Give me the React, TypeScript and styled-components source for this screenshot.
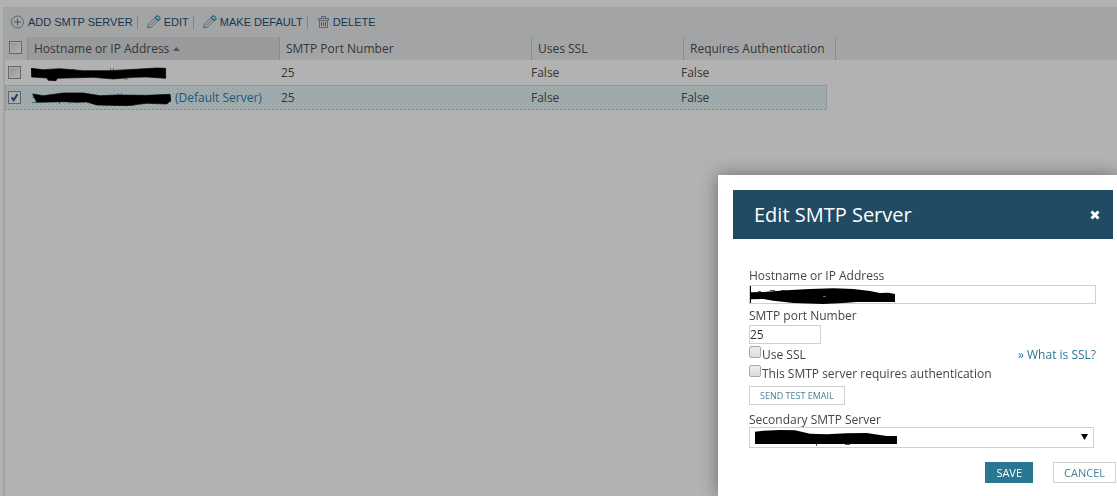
import React, { useState } from 'react';
import styled, { createGlobalStyle, css } from 'styled-components';

const GlobalStyle = createGlobalStyle`
  * { box-sizing: border-box; }
  html, body, #root { height: 100%; }
  body {
    margin: 0;
    overflow: hidden;
    background: #b2b2b2;
    color: #353535;
    font: 12px/16px "Open Sans", sans-serif;
  }
`;

const Page = styled.main`
  min-height: 100%;
  padding: 7px 0 0 3px;
  display: flex;
`;

const Panel = styled.section`
  flex: 1;
  border-left: 2px solid #a3a3a4;
`;

const Toolbar = styled.div`
  display: flex;
  align-items: center;
  height: 30px;
  padding-left: 5px;
  background: #a3a4a6;
`;

const ToolButton = styled.button`
  display: flex;
  align-items: center;
  gap: 3px;
  padding: 0;
  border: 0;
  background: none;
  color: #17374c;
  font: 11px/16px "Liberation Sans", Arial, sans-serif;
  cursor: pointer;
`;

const Divider = styled.span`
  width: 1px;
  height: 13px;
  margin: 0 9px 0 4px;
  background: #85827a;
`;

const Grid = styled.table`
  display: block;
`;

const GridHead = styled.thead`
  display: block;
  background: #a3a4a6;
`;

const GridBody = styled.tbody`
  display: block;
`;

const HeadRow = styled.tr`
  display: grid;
  grid-template-columns: 23px 252px 252px 152px 152px;
  height: 23px;
`;

const HeadCell = styled.th<{ $sorted?: boolean; $check?: boolean }>`
  display: flex;
  align-items: center;
  gap: 4px;
  padding: ${p => (p.$check ? '0 0 2px 4px' : '0 0 0 6px')};
  border-right: 1px solid #8b8c8e;
  font-weight: 400;
  background: ${p => (p.$sorted ? '#999a9b' : 'transparent')};
`;

const Row = styled.tr<{ $selected?: boolean }>`
  display: grid;
  grid-template-columns: 21px 250px 250px 150px 149px;
  width: 822px;
  height: 25px;
  border: 1px dotted transparent;
  ${p => p.$selected && css`
    border-color: #6d8f92;
    background: #a6afb0 url("data:image/svg+xml,%3Csvg xmlns='http://www.w3.org/2000/svg' width='4' height='4' shape-rendering='crispEdges'%3E%3Cpath fill='%2398a5a7' d='M0 0h2v1h1v1h1v2h-1v-1h-1v-1h-1v-1h-1zM0 3h1v1h-1z'/%3E%3C/svg%3E");
  `}
`;

const Cell = styled.td<{ $check?: boolean }>`
  display: flex;
  align-items: center;
  gap: 4px;
  padding: ${p => (p.$check ? '0 0 0 2px' : '0 0 0 4px')};
`;

const Tick = styled.input<{ $light?: boolean }>`
  appearance: none;
  flex: none;
  width: 13px;
  height: 13px;
  margin: 0;
  display: grid;
  place-items: center;
  border: 1px solid #656565;
  background: linear-gradient(135deg, #8f9192, #b4b4b4);
  box-shadow: inset 0 0 0 1px #adadad;
  &:checked {
    background: #acacac url("data:image/svg+xml,%3Csvg xmlns='http://www.w3.org/2000/svg' viewBox='0 0 11 11'%3E%3Cpath d='M2.6 5.2 4.6 8.2 8.4 2.2' fill='none' stroke='%23263068' stroke-width='1.9'/%3E%3C/svg%3E");
  }
  ${p => p.$light && css`
    width: 12px;
    height: 12px;
    border-color: #a9a9a9;
    border-radius: 2px;
    background: linear-gradient(#eeeeee, #dcdcdc);
    box-shadow: none;
  `}
`;

const HostLink = styled.a`
  display: flex;
  align-items: center;
  gap: 4px;
  color: #1b5878;
  text-decoration: none;
`;

const Redaction = styled.svg`
  display: block;
  flex: none;
`;

const Dialog = styled.section`
  position: fixed;
  top: 175px;
  right: 0;
  bottom: 0;
  width: 399px;
  padding: 15px 4px 0 15px;
  background: #fff;
  color: #444;
  box-shadow: 0 0 16px rgba(0, 0, 0, 0.4);
`;

const DialogHeader = styled.header`
  display: flex;
  align-items: center;
  justify-content: space-between;
  height: 49px;
  padding: 0 12px 0 21px;
  background: #214a63;
  color: #fff;
`;

const Title = styled.h2`
  margin: 0;
  font-size: 20px;
  line-height: 28px;
  font-weight: 400;
`;

const CloseButton = styled.button`
  display: flex;
  padding: 0;
  border: 0;
  background: none;
  color: #fff;
  cursor: pointer;
`;

const Form = styled.form`
  display: flex;
  flex-direction: column;
  align-items: flex-start;
  padding: 27px 0 0 16px;
`;

const Label = styled.label`
  margin-top: 3px;
  line-height: 14px;
`;

const Field = styled.div<{ $tight?: boolean }>`
  position: relative;
  align-self: stretch;
  margin: ${p => (p.$tight ? 0 : 2)}px 0 2px;
`;

const Overlay = styled(Redaction)`
  position: absolute;
  pointer-events: none;
  left: 1px;
  top: 1px;
`;

const TextInput = styled.input<{ $width: number }>`
  display: block;
  width: ${p => p.$width}px;
  height: 19px;
  padding: 0;
  border: 1px solid #d0d0d0;
  outline: 0;
  color: #333;
  font: inherit;
`;

const SelectBox = styled.select`
  appearance: none;
  display: block;
  width: 345px;
  height: 21px;
  padding: 0 20px 0 5px;
  border: 1px solid #d0d0d0;
  border-radius: 0;
  background: #fff;
  font: inherit;
`;

const SelectArrow = styled(Redaction)`
  position: absolute;
  right: 25px;
  top: 7px;
  pointer-events: none;
`;

const CheckLine = styled.div`
  align-self: stretch;
  display: flex;
  justify-content: space-between;
  height: 19px;
  padding-right: 17px;
`;

const CheckLabel = styled.label`
  display: flex;
  gap: 1px;
  line-height: 18px;
`;

const HelpLink = styled.a`
  color: #28789a;
  line-height: 18px;
  text-decoration: none;
`;

const Button = styled.button<{ $primary?: boolean; $small?: boolean }>`
  height: ${p => (p.$small ? 19 : 21)}px;
  padding: 0 10px;
  border: 1px solid ${p => (p.$primary ? '#287894' : '#d0d0d0')};
  background: ${p => (p.$primary ? '#287894' : '#fff')};
  color: ${p => (p.$primary ? '#fff' : '#4a8297')};
  font: ${p => (p.$small ? 9 : 11)}px/16px "Open Sans", sans-serif;
  white-space: nowrap;
  cursor: pointer;
`;

const TestButton = styled(Button)`
  margin: 2px 0 5px;
`;

const Actions = styled.div`
  align-self: flex-end;
  display: flex;
  gap: 20px;
  margin: 12px -3px 0 0;
`;

const PlusIcon = () => (
  <svg width="15" height="14" viewBox="0 0 15 14" fill="none" aria-hidden="true">
    <circle cx="7.5" cy="7" r="6" stroke="#5c666c" />
    <path d="M7.5 3.5v7M4 7h7" stroke="#1d6479" />
  </svg>
);

const PencilIcon = () => (
  <svg width="14" height="14" viewBox="0 0 14 14" fill="none" aria-hidden="true">
    <path d="M1.700 8.800 8.300 2.500M4.800 12 11.300 5.500M3.200 10.400 9.800 4" stroke="#5c666c" strokeWidth=".9" />
    <path d="M8.300 2.500 10 .9c.8-.7 3.700 2.200 3 3l-1.700 1.600-3-3Z" stroke="#1d6479" strokeWidth="1.2" />
    <path d="M1.700 8.800.7 12.900l4.100-.9" stroke="#5c666c" />
    <path d="m1 11.500 1.400 1.400" stroke="#1d6479" />
  </svg>
);

const TrashIcon = () => (
  <svg width="13" height="14" viewBox="0 0 13 14" fill="none" aria-hidden="true">
    <path d="M1 3.500h11M4.500 3.500v-2h4v2M1.500 3.500v2h10v-2M2.500 5.500v7h8v-7" stroke="#5c666c" />
    <path d="M4.500 7v4M6.500 7v4M8.500 7v4" stroke="#1d6479" />
  </svg>
);

const CrossIcon = () => (
  <svg width="11" height="10" viewBox="0 0 11 10" aria-hidden="true">
    <path d="m1.500 1.500 7 7m0-7-7 7" stroke="#fff" strokeWidth="3" />
  </svg>
);

const hosts = [
  {
    id: 'first',
    width: 136,
    marks: 'M1.500 1v3M41 2.500h3M79.500 1v4M82.500 1v4M93 12h4',
    path: 'M0 4 37 8 87 5 157 11 237 11 327 6 377 3 404 4V34L347 30 307 31 247 36 187 31 107 33 79 34 75 41 52 40 47 33 2 30Z',
    isDefault: false,
  },
  {
    id: 'second',
    width: 140,
    marks: 'M1 5.500h3M1 10.500h5M28.500 9v3M39 10v2M87.500 1v3M90.500 1v3M99 13.500h5',
    path: 'M5 6 37 11 97 3 157 3 207 11 257 9 347 10 417 7 420 26 407 36 347 34 287 41 197 39 167 30 137 31 97 29 17 31Z',
    isDefault: true,
  },
];

export default function App() {
  const [selected, setSelected] = useState('second');
  return (
    <>
      <GlobalStyle />
      <Page>
        <Panel>
          <Toolbar>
            <ToolButton><PlusIcon />ADD SMTP SERVER</ToolButton>
            <Divider />
            <ToolButton><PencilIcon />EDIT</ToolButton>
            <Divider />
            <ToolButton><PencilIcon />MAKE DEFAULT</ToolButton>
            <Divider />
            <ToolButton><TrashIcon />DELETE</ToolButton>
          </Toolbar>
          <Grid>
            <GridHead>
              <HeadRow>
                <HeadCell $check><Tick type="checkbox" aria-label="Select all" /></HeadCell>
                <HeadCell $sorted>
                  Hostname or IP Address
                  <svg width="7" height="4" viewBox="0 0 7 4" aria-hidden="true"><path d="M0 4 3.5 0 7 4Z" fill="#555" /></svg>
                </HeadCell>
                <HeadCell>SMTP Port Number</HeadCell>
                <HeadCell>Uses SSL</HeadCell>
                <HeadCell>Requires Authentication</HeadCell>
              </HeadRow>
            </GridHead>
            <GridBody>
              {hosts.map(h => (
                <Row key={h.id} $selected={selected === h.id}>
                  <Cell $check>
                    <Tick
                      type="checkbox"
                      aria-label="Select server"
                      checked={selected === h.id}
                      onChange={() => setSelected(selected === h.id ? '' : h.id)}
                    />
                  </Cell>
                  <Cell>
                    <HostLink href="#">
                      <Redaction width={h.width} height="19" viewBox={`0 -4 ${h.width} 19`} role="img" aria-label="Hidden hostname">
                        <path d={h.marks} stroke="#1b5878" strokeOpacity=".7" fill="none" />
                        <path d={h.path} transform="scale(.3333)" stroke="#000" strokeWidth="2" strokeLinejoin="round" />
                      </Redaction>
                      {h.isDefault && '(Default Server)'}
                    </HostLink>
                  </Cell>
                  <Cell>25</Cell>
                  <Cell>False</Cell>
                  <Cell>False</Cell>
                </Row>
              ))}
            </GridBody>
          </Grid>
        </Panel>
      </Page>

      <Dialog role="dialog" aria-labelledby="dialog-title">
        <DialogHeader>
          <Title id="dialog-title">Edit SMTP Server</Title>
          <CloseButton aria-label="Close"><CrossIcon /></CloseButton>
        </DialogHeader>
        <Form onSubmit={e => e.preventDefault()}>
          <Label htmlFor="host">Hostname or IP Address</Label>
          <Field>
            <TextInput id="host" $width={347} />
            <Overlay width="146" height="18" viewBox="0 0 146 18" aria-hidden="true">
              <path d="M.5 0v17" stroke="#000" />
              <path d="M8 5.500h3M20 4.500h5M31 4.500h4" stroke="#555" />
              <path transform="scale(.3333)" d="M1 19 40 18 110 13 180 9 250 7 310 9 360 15 390 21 415 20 435 24V48H320L280 51 220 54 130 51 70 44 40 39 1 40Z" />
              <path d="M73 10.500h3" stroke="#666" />
            </Overlay>
          </Field>
          <Label htmlFor="port">SMTP port Number</Label>
          <Field><TextInput id="port" $width={72} defaultValue="25" /></Field>
          <CheckLine>
            <CheckLabel><Tick $light type="checkbox" />Use SSL</CheckLabel>
            <HelpLink href="#">» What is SSL?</HelpLink>
          </CheckLine>
          <CheckLine>
            <CheckLabel><Tick $light type="checkbox" />This SMTP server requires authentication</CheckLabel>
          </CheckLine>
          <TestButton $small type="button">SEND TEST EMAIL</TestButton>
          <Label htmlFor="secondary">Secondary SMTP Server</Label>
          <Field $tight>
            <SelectBox id="secondary" />
            <Overlay width="150" height="18" viewBox="0 0 150 18" aria-hidden="true">
              <path transform="translate(5 1) scale(.3333)" d="M0 8 25 5 75 3 120 4 165 14 215 16 275 13 335 12 395 21H426V45H0Z" />
              <path d="M66.500 16v2M95 16.500h5" stroke="#555" />
            </Overlay>
            <SelectArrow width="7" height="6" viewBox="0 0 7 6" aria-hidden="true"><path d="M0 0h7L3.500 6Z" /></SelectArrow>
          </Field>
          <Actions>
            <Button $primary type="submit">SAVE</Button>
            <Button type="button">CANCEL</Button>
          </Actions>
        </Form>
      </Dialog>
    </>
  );
}
